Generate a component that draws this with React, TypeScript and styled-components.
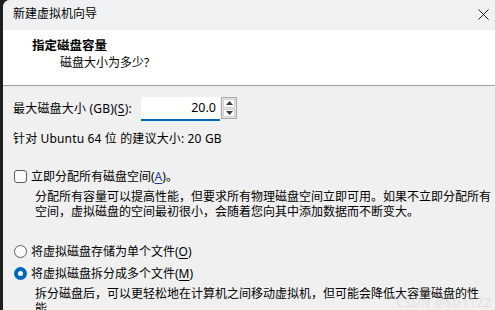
import React from 'react'
import styled, { createGlobalStyle } from 'styled-components'

const GlobalStyle = createGlobalStyle`
  html, body {
    margin: 0;
    padding: 0;
    background: #1f1f1f;
  }
  body {
    font-family: "Noto Sans", "Noto Sans CJK SC", sans-serif;
    font-size: 12px;
    color: #000;
  }
`

const Screen = styled.div`
  display: flex;
  width: 495px;
  height: 310px;
  overflow: hidden;
  background: #1f1f1f;
`

const Wizard = styled.div`
  flex: 1;
  margin-left: 3px;
  display: flex;
  flex-direction: column;
  background: #f0f0f0;
  border-top-left-radius: 7px;
  overflow: hidden;
  position: relative;
`

const TitleBar = styled.div`
  height: 30px;
  flex: none;
  display: flex;
  align-items: center;
  justify-content: space-between;
  padding: 0 4px 2px 10px;
  background: #eff1f2;
  line-height: 14px;
  box-sizing: border-box;
`

const CloseButton = styled.div`
  width: 16px;
  height: 16px;
  display: flex;
  align-items: center;
  justify-content: center;
`

const Header = styled.div`
  height: 56px;
  flex: none;
  background: #fff;
  border-bottom: 1px solid #a0a0a0;
  display: flex;
  flex-direction: column;
  padding: 8px 0 0 29px;
  box-sizing: border-box;
`

const HeaderTitle = styled.div`
  font-weight: 700;
  font-size: 12.5px;
  line-height: 16px;
`

const HeaderSub = styled.div`
  margin-top: 1px;
  padding-left: 28px;
  line-height: 16px;
`

const Body = styled.div`
  flex: 1;
  display: flex;
  flex-direction: column;
  padding: 10px 0 0 10px;
`

const SizeRow = styled.div`
  display: flex;
  align-items: center;
  height: 25px;
`

const Label = styled.span`
  line-height: 15px;
  width: 128px;
  letter-spacing: 0.2px;
`

const Underline = styled.span`
  text-decoration: underline;
  text-underline-offset: 2px;
`

const Field = styled.div`
  width: 79px;
  height: 24px;
  box-sizing: border-box;
  background: #fff;
  border-bottom: 2px solid #0067c0;
  display: flex;
  align-items: center;
  justify-content: flex-end;
  padding: 0 4px 0 0;
  font-size: 12.5px;
`

const Spinner = styled.div`
  margin: 1px 0 0 1px;
  width: 16px;
  height: 22px;
  box-sizing: border-box;
  border: 1px solid #a8a8a8;
  background: #e6e6e6;
  display: flex;
  flex-direction: column;
  gap: 1px;
  padding: 1px;
  align-self: flex-start;
`

const SpinButton = styled.div`
  flex: 1;
  background: #fdfdfd;
  border: 1px solid #d0d0d0;
  display: flex;
  align-items: center;
  justify-content: center;
`

const Line = styled.div<{ $top: number }>`
  margin-top: ${(p) => p.$top}px;
  line-height: 15px;
  letter-spacing: 0.15px;
  white-space: nowrap;
`

const OptionRow = styled.label<{ $top: number }>`
  margin-top: ${(p) => p.$top}px;
  display: flex;
  align-items: center;
  gap: 4px;
  padding-left: 1px;
  line-height: 15px;
  white-space: nowrap;
`

const Box = styled.span`
  width: 13px;
  height: 13px;
  box-sizing: border-box;
  border: 1px solid #5e5e5e;
  border-radius: 3px;
  background: #fbfbfb;
`

const Radio = styled.span<{ $checked?: boolean }>`
  width: 13px;
  height: 13px;
  box-sizing: border-box;
  border-radius: 50%;
  border: ${(p) => (p.$checked ? '4px solid #0067c0' : '1px solid #5e5e5e')};
  background: #fbfbfb;
`

const Mnemonic = styled.span`
  color: #1a3f9a;
  text-decoration: underline;
  text-underline-offset: 2px;
`

const Description = styled.div<{ $top: number }>`
  margin-top: ${(p) => p.$top}px;
  padding-left: 22px;
  line-height: 15px;
  white-space: nowrap;
`

const Watermark = styled.span`
  position: absolute;
  right: 4px;
  bottom: -1px;
  color: rgba(190, 190, 190, 0.35);
  font-size: 12px;
  letter-spacing: 0.5px;
`

const Arrow: React.FC<{ up?: boolean }> = ({ up }) => (
  <svg width="7" height="4" viewBox="0 0 7 4">
    <path d={up ? 'M0 4 L3.5 0 L7 4 Z' : 'M0 0 L3.5 4 L7 0 Z'} fill="#3a3a3a" />
  </svg>
)

const allocateLines = [
  '分配所有容量可以提高性能，但要求所有物理磁盘空间立即可用。如果不立即分配所有',
  '空间，虚拟磁盘的空间最初很小，会随着您向其中添加数据而不断变大。',
]

const splitLines = ['拆分磁盘后，可以更轻松地在计算机之间移动虚拟机，但可能会降低大容量磁盘的性', '能。']

const App: React.FC = () => {
  return (
    <Screen>
      <GlobalStyle />
      <Wizard>
        <TitleBar>
          <span>新建虚拟机向导</span>
          <CloseButton>
            <svg width="11" height="11" viewBox="0 0 11 11">
              <path d="M0.5 0.5 L10.5 10.5 M10.5 0.5 L0.5 10.5" stroke="#1a1a1a" strokeWidth="1" />
            </svg>
          </CloseButton>
        </TitleBar>
        <Header>
          <HeaderTitle>指定磁盘容量</HeaderTitle>
          <HeaderSub>磁盘大小为多少?</HeaderSub>
        </Header>
        <Body>
          <SizeRow>
            <Label>
              最大磁盘大小 (GB)(<Underline>S</Underline>):
            </Label>
            <Field>20.0</Field>
            <Spinner>
              <SpinButton>
                <Arrow up />
              </SpinButton>
              <SpinButton>
                <Arrow />
              </SpinButton>
            </Spinner>
          </SizeRow>
          <Line $top={10}>针对 Ubuntu 64 位 的建议大小: 20 GB</Line>
          <OptionRow $top={23}>
            <Box />
            <span>
              立即分配所有磁盘空间(<Mnemonic>A</Mnemonic>)。
            </span>
          </OptionRow>
          <Description $top={5}>
            {allocateLines.map((l) => (
              <div key={l}>{l}</div>
            ))}
          </Description>
          <OptionRow $top={25}>
            <Radio />
            <span>
              将虚拟磁盘存储为单个文件(<Underline>O</Underline>)
            </span>
          </OptionRow>
          <OptionRow $top={7}>
            <Radio $checked />
            <span>
              将虚拟磁盘拆分成多个文件(<Underline>M</Underline>)
            </span>
          </OptionRow>
          <Description $top={5}>
            {splitLines.map((l) => (
              <div key={l}>{l}</div>
            ))}
          </Description>
        </Body>
        <Watermark>CSDN @SU1122</Watermark>
      </Wizard>
    </Screen>
  )
}

export default App
